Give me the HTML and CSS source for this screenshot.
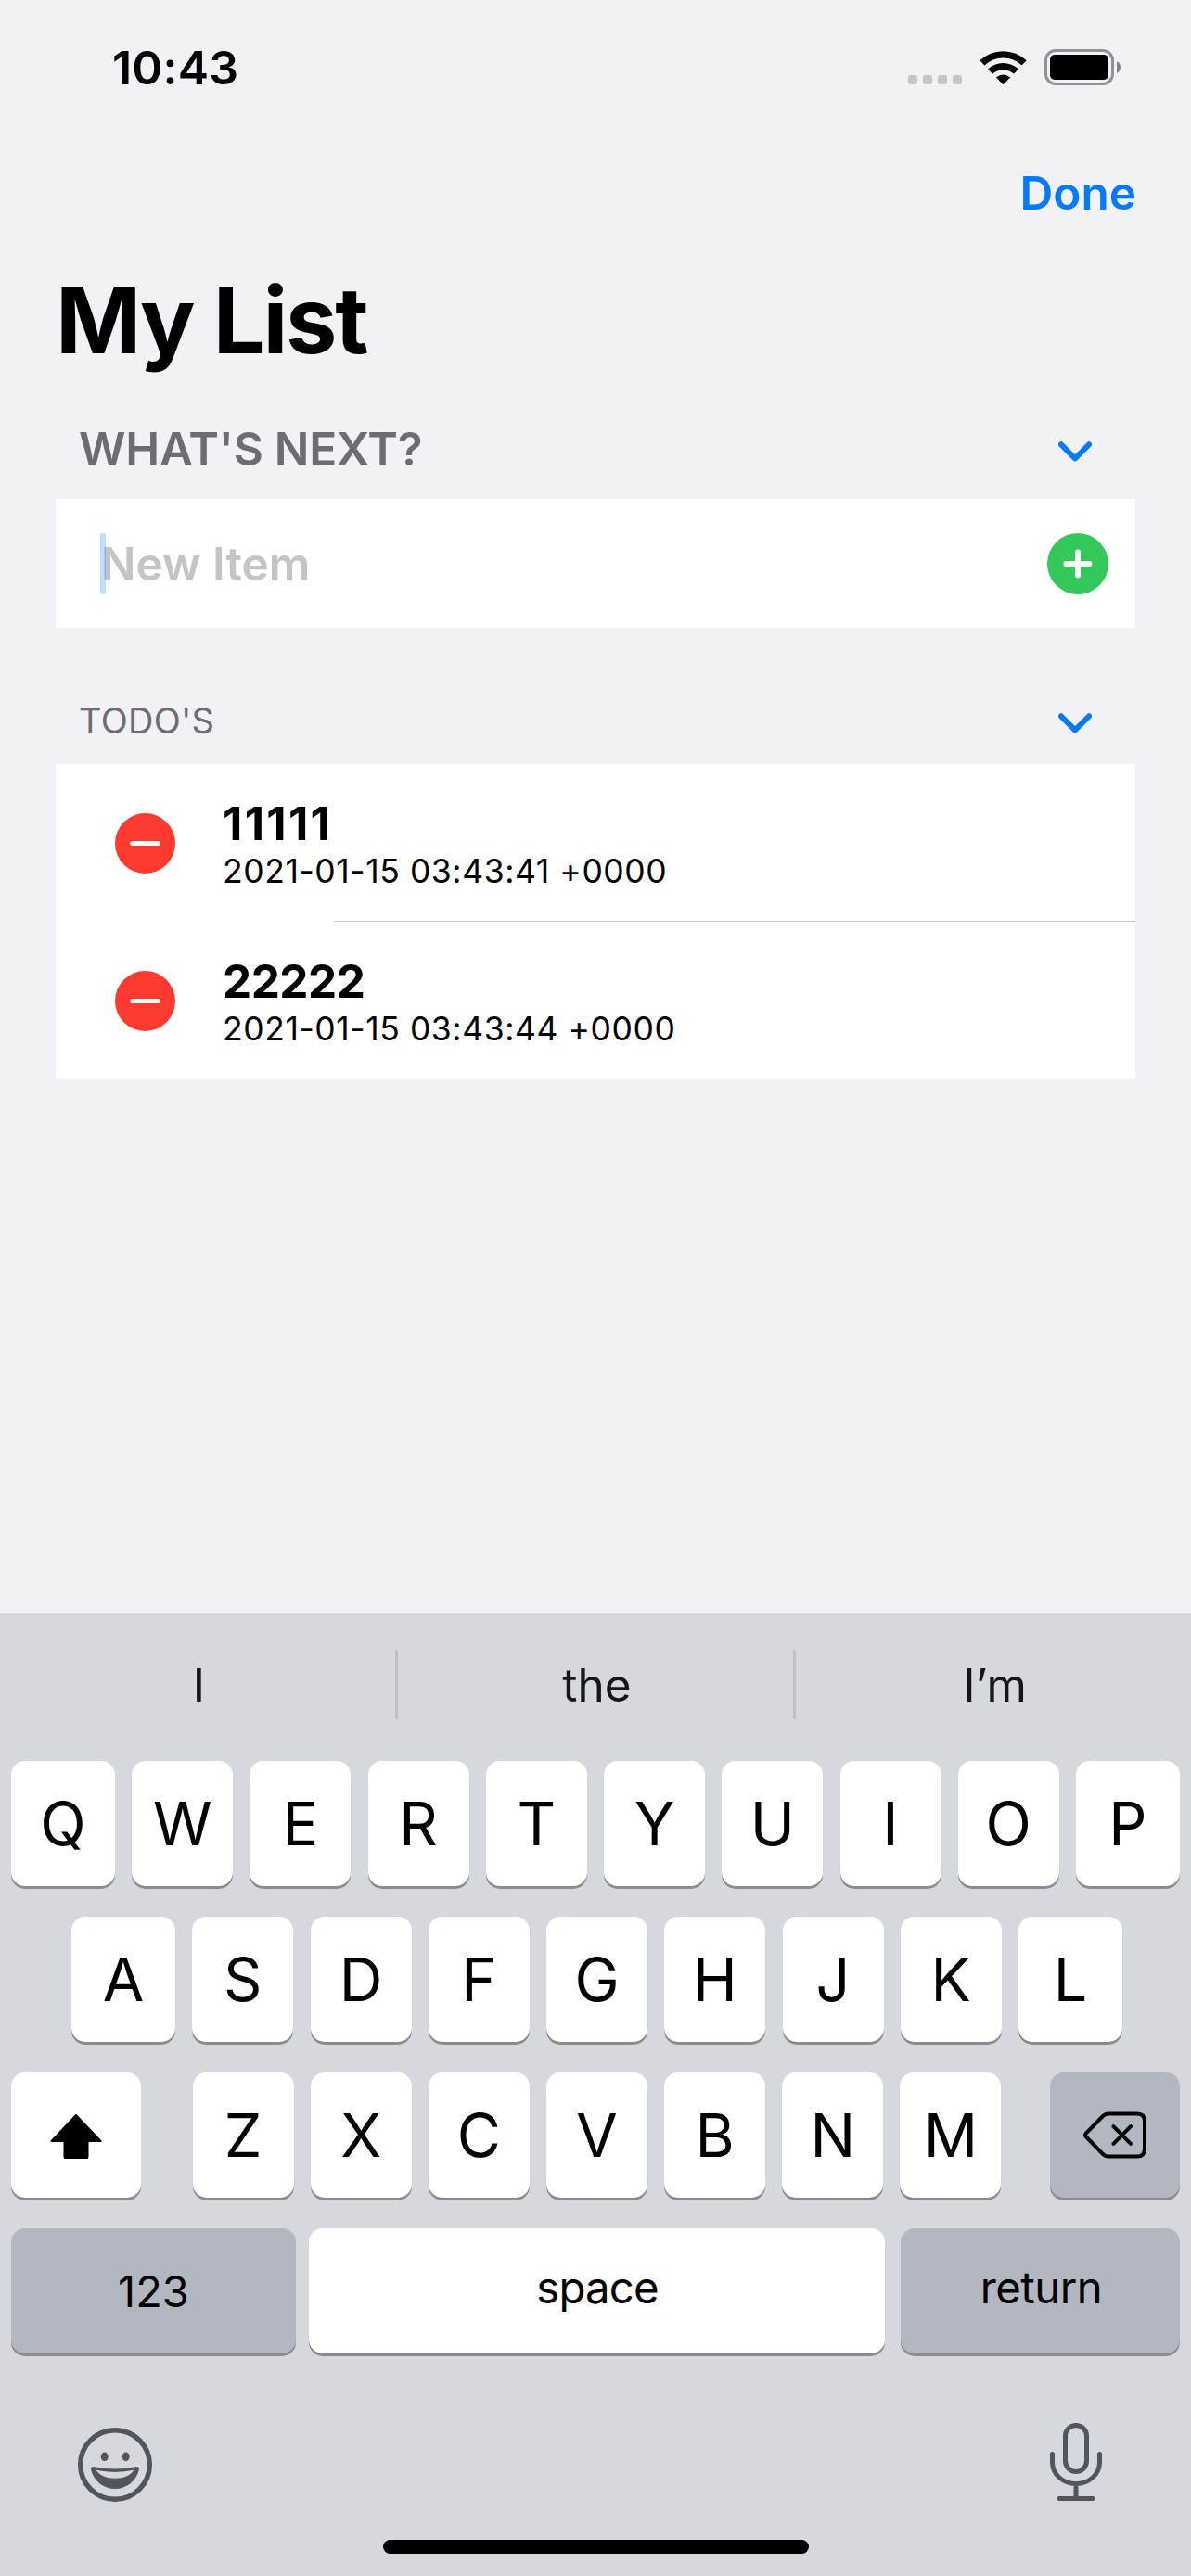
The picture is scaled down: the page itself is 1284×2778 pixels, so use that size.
FILE: index.html
```
<!DOCTYPE html>
<html lang="en">
<head>
<meta charset="utf-8">
<title>My List</title>
<link rel="stylesheet" href="styles.css">
</head>
<body>
<div class="screen">
  <header class="status-bar">
    <span class="time">10:43</span>
    <div class="status-icons">
      <svg class="dots" width="58" height="10" viewBox="0 0 58 10" fill="#c4c3c8"><rect width="10" height="10" rx="3"/><rect x="16" width="10" height="10" rx="3"/><rect x="32" width="10" height="10" rx="3"/><rect x="48" width="10" height="10" rx="3"/></svg>
      <svg class="wifi" width="52" height="38" viewBox="0 0 52 38"><path d="M25.5 37.3 17.8 29.6Q25.5 23.4 33.2 29.6Z"/><path d="M11.6 23.2a20 20 0 0 1 27.8 0M2.9 13.9a32.6 32.6 0 0 1 45.2 0" fill="none" stroke="#000" stroke-width="7.2"/></svg>
      <svg class="battery" width="84" height="40" viewBox="0 0 84 40"><rect x="1.5" y="1.5" width="72" height="36" rx="10.5" fill="none" stroke="#929195" stroke-width="3"/><rect x="6" y="6" width="63" height="27" rx="5"/><path d="M78 13q4 2.4 4 6.5t-4 6.5z" fill="#858589"/></svg>
    </div>
  </header>
  <nav class="nav-bar"><span class="done">Done</span></nav>
  <h1 class="title">My List</h1>
  <section class="section section-new">
    <div class="section-head"><h2 class="heading heading-large">WHAT'S NEXT?</h2>
      <svg class="chevron" width="36" height="22" viewBox="0 0 36 22"><path d="M3 3.300 18 18.300 33 3.300"/></svg></div>
    <div class="card input-row">
      <div class="field"><span class="caret"></span><span class="placeholder">New Item</span></div>
      <svg width="66" height="66" viewBox="0 0 66 66"><circle cx="33" cy="33" r="33" fill="#34c759"/><path d="M20.500 33h25M33 20.500v25" stroke="#fff" stroke-width="6" stroke-linecap="round"/></svg>
    </div>
  </section>
  <section class="section section-todo">
    <div class="section-head"><h2 class="heading heading-small">TODO'S</h2>
      <svg class="chevron" width="36" height="22" viewBox="0 0 36 22"><path d="M3 3.300 18 18.300 33 3.300"/></svg></div>
    <ul class="card">
      <li class="todo">
        <svg class="remove" width="65" height="65" viewBox="0 0 65 65"><circle cx="32.500" cy="32.500" r="32.500"/><rect x="16.300" y="30" width="32.400" height="5" rx="2"/></svg>
        <div class="todo-text"><span class="todo-name ones">11111</span><span class="todo-date">2021-01-15 03:43:41 +0000</span></div>
      </li>
      <li class="todo">
        <svg class="remove" width="65" height="65" viewBox="0 0 65 65"><circle cx="32.500" cy="32.500" r="32.500"/><rect x="16.300" y="30" width="32.400" height="5" rx="2"/></svg>
        <div class="todo-text"><span class="todo-name">22222</span><span class="todo-date">2021-01-15 03:43:44 +0000</span></div>
      </li>
    </ul>
  </section>
  <div class="keyboard">
    <div class="suggestions"><span>I</span><span class="mid">the</span><span>I’m</span></div>
    <div class="keys">
      <div class="row"><b class="edge">Q</b><b>W</b><b>E</b><b>R</b><b>T</b><b>Y</b><b>U</b><b>I</b><b>O</b><b class="edge">P</b></div>
      <div class="row row-home"><b class="edge">A</b><b>S</b><b>D</b><b>F</b><b>G</b><b>H</b><b>J</b><b>K</b><b class="edge">L</b></div>
      <div class="row row-bottom">
        <b class="side"><svg width="58" height="50" viewBox="0 -1.5 58 50"><path d="M29 1.500 55.500 29.500H41.500V46a2 2 0 0 1-2 2h-21a2 2 0 0 1-2-2V29.500H2.500Z" stroke="#000" stroke-width="2" stroke-linejoin="round"/></svg></b>
        <div class="letters"><b>Z</b><b>X</b><b>C</b><b>V</b><b>B</b><b>N</b><b>M</b></div>
        <b class="side dark"><svg width="70" height="54" viewBox="0 -0.5 70 54" fill="none" stroke="#000" stroke-width="4" stroke-linecap="round" stroke-linejoin="round"><path d="M28 3h31q8 0 8 8v30q0 8-8 8H28q-3.500 0-6-2.500L4 28q-2-2 0-4L22 5.500Q24.500 3 28 3ZM33.400 16.700l18.600 18.600M52 16.700l-18.600 18.600"/></svg></b>
      </div>
      <div class="row row-space"><b class="dark numbers">123</b><b class="space">space</b><b class="dark return">return</b></div>
    </div>
    <div class="dock">
      <svg class="emoji" width="82" height="82" viewBox="0 0 82 82" fill="#50565b"><circle cx="41" cy="41" r="37.300" fill="none" stroke="#50565b" stroke-width="5.500"/><ellipse cx="29.700" cy="32.300" rx="4" ry="4.800"/><ellipse cx="52.700" cy="32.300" rx="4" ry="4.800"/><path fill-rule="evenodd" d="M18 43q23 5 46 0q3 0 3 3C64 59 53 67 41 67S18 59 15 46q0-3 3-3Zm2.500 3.800c4 6 11.500 9 20.500 9s16.500-3 20.500-9q-20.500 4.200-41 0Z"/></svg>
      <svg width="56" height="86" viewBox="0 0 56 86" fill="none" stroke="#50565b" stroke-width="5" stroke-linecap="round"><rect x="16.500" y="3.500" width="23" height="50" rx="11.500"/><path d="M2.500 34.500v9a25.500 23 0 0 0 51 0v-9M28 67v14M10 82.500h36"/></svg>
    </div>
    <div class="home-indicator"></div>
  </div>
</div>
</body>
</html>
```
FILE: styles.css
```
* { box-sizing: border-box; margin: 0; padding: 0; }
body { background: #f2f1f6; font-family: Inter, "Liberation Sans", sans-serif; color: #000; }
svg { display: block; flex: none; }
.screen { width: 1284px; height: 2778px; display: flex; flex-direction: column; overflow: hidden; }
.status-bar { height: 146px; padding: 0 74px 0 121px; display: flex; justify-content: space-between; align-items: center; }
.time { font-size: 50px; font-weight: 600; letter-spacing: .2px; }
.status-icons { display: flex; align-items: center; }
.dots { margin-top: 26px; }
.wifi { margin: 0 18px 0 19px; }
.chevron { fill: none; stroke: #007aff; stroke-width: 6; stroke-linecap: round; stroke-linejoin: round; margin-top: 6px; }
.nav-bar { height: 124px; padding-right: 59px; display: flex; align-items: center; justify-content: flex-end; }
.done { font-size: 49.5px; font-weight: 600; color: #007aff; }
.title { height: 150px; line-height: 150px; padding-left: 60px; font-size: 99px; font-weight: 700; letter-spacing: -2.2px; }
.section { margin: 0 60px; }
.section-head { display: flex; align-items: center; justify-content: space-between; padding: 0 47px 0 25px; }
.section-new .section-head { height: 108px; margin-top: 10px; }
.section-todo .section-head { height: 95px; margin-top: 52px; }
.heading { color: #6d6c72; }
.heading-large { font-size: 49.5px; font-weight: 600; letter-spacing: -.25px; }
.heading-small { font-size: 38px; font-weight: 400; letter-spacing: .25px; }
.card { background: #fff; list-style: none; }
.input-row { height: 139px; padding: 0 29px 0 48px; display: flex; align-items: center; justify-content: space-between; }
.field { display: flex; align-items: center; position: relative; }
.caret { position: absolute; left: 0; width: 6px; height: 66px; border-radius: 3px; background: rgba(0, 122, 255, .25); }
.placeholder { margin-left: 1px; font-size: 49.5px; font-weight: 600; color: #c4c4c6; }
.todo { height: 170px; padding-left: 64px; display: flex; align-items: center; }
.todo:first-child { background: linear-gradient(#c6c6c8, #c6c6c8) 300px 169px / 864px 1px no-repeat; }
.remove circle { fill: #ff3b30; }
.remove rect { fill: #fff; }
.todo-text { display: flex; flex-direction: column; margin: 3px 0 0 51px; }
.todo-name { font-size: 49.5px; line-height: 58px; font-weight: 700; letter-spacing: -.5px; }
.todo-name.ones { letter-spacing: 2.3px; }
.todo-date { font-size: 35.5px; line-height: 45px; letter-spacing: .57px; }
.keyboard { margin-top: auto; height: 1038px; background: #d7d8de; display: flex; flex-direction: column; }
.suggestions { height: 153px; padding-top: 39px; display: grid; grid-template-columns: 426px 432px 426px; }
.suggestions span { height: 75px; line-height: 76px; padding-left: 3px; text-align: center; font-size: 49.5px; color: #161616; }
.mid { border: solid #c1c2c7; border-width: 0 3px; }
.keys { padding: 6px 12px 0; display: flex; flex-direction: column; gap: 33px; }
.row, .letters { display: flex; justify-content: space-between; }
.row b { height: 135px; width: 109px; border-radius: 15px; background: #fff; box-shadow: 0 3px 0 #8b8c90; display: flex; align-items: center; justify-content: center; font-size: 64.6px; font-weight: 400; }
.row b.edge { width: 112px; }
.row-home { padding: 0 62px 0 65px; }
.letters { width: 872px; margin-left: 3px; }
.row b.side { width: 140px; }
.row b.dark { background: #b3b7c1; }
.row b.numbers { width: 307px; font-size: 47px; }
.row b.space { width: 621px; margin-right: 3px; padding: 0 0 8px 1px; font-size: 47.3px; letter-spacing: -.8px; }
.row b.return { width: 301px; padding: 0 0 8px 2px; font-size: 47.3px; letter-spacing: -.5px; }
.dock { display: flex; justify-content: space-between; padding: 74px 96px 0 83px; height: 198px; }
.emoji { margin-top: 5px; }
.home-indicator { width: 459px; height: 15px; border-radius: 8px; background: #000; margin: 3px auto 0; }
```
